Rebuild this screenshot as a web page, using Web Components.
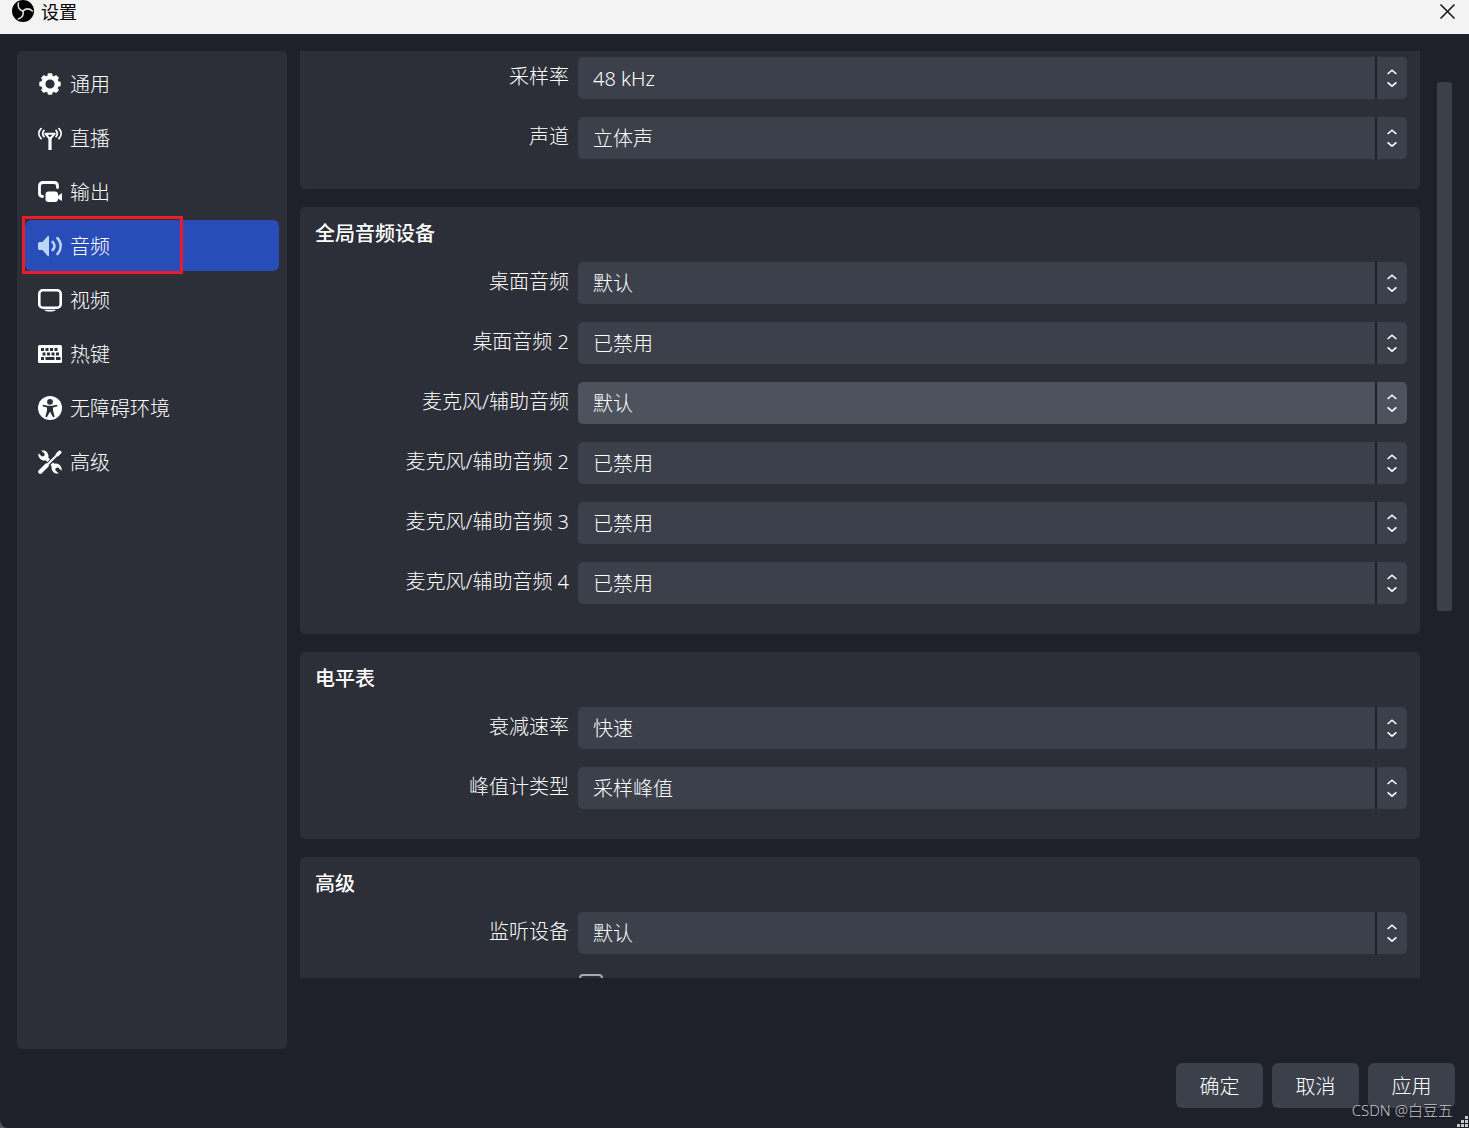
<!DOCTYPE html>
<html lang="zh-CN">
<head>
<meta charset="utf-8">
<title>设置</title>
<style>
html, body { height: 100%; margin: 0; }
body {
  background: #55585f;
  color: #fff;
  font: 300 20px/30px "Noto Sans", "Noto Sans CJK SC", sans-serif;
  --window: #1f212a;
  --panel: #2c2e38;
  --control: #3c404b;
  --control-hot: #4e525c;
  --accent: #284cb8;
}
</style>
</head>
<body>
<settings-window>
  <title-bar slot="title">设置</title-bar>
  <nav-list slot="nav">
    <nav-item icon="gear">通用</nav-item>
    <nav-item icon="antenna">直播</nav-item>
    <nav-item icon="output">输出</nav-item>
    <nav-item icon="audio" selected>音频</nav-item>
    <nav-item icon="video">视频</nav-item>
    <nav-item icon="keyboard">热键</nav-item>
    <nav-item icon="access">无障碍环境</nav-item>
    <nav-item icon="tools">高级</nav-item>
  </nav-list>
  <settings-group>
    <setting-row label="采样率" value="48 kHz"></setting-row>
    <setting-row label="声道" value="立体声"></setting-row>
  </settings-group>
  <settings-group heading="全局音频设备">
    <setting-row label="桌面音频" value="默认"></setting-row>
    <setting-row label="桌面音频 2" value="已禁用"></setting-row>
    <setting-row label="麦克风/辅助音频" value="默认" hot></setting-row>
    <setting-row label="麦克风/辅助音频 2" value="已禁用"></setting-row>
    <setting-row label="麦克风/辅助音频 3" value="已禁用"></setting-row>
    <setting-row label="麦克风/辅助音频 4" value="已禁用"></setting-row>
  </settings-group>
  <settings-group heading="电平表">
    <setting-row label="衰减速率" value="快速"></setting-row>
    <setting-row label="峰值计类型" value="采样峰值"></setting-row>
  </settings-group>
  <settings-group heading="高级">
    <setting-row label="监听设备" value="默认"></setting-row>
    <check-row></check-row>
  </settings-group>
  <push-button slot="actions">确定</push-button>
  <push-button slot="actions">取消</push-button>
  <push-button slot="actions">应用</push-button>
</settings-window>

<script>
const teeth = '<rect x="9.6" y="1.3" width="4.8" height="4" rx="1.2"/><rect x="9.6" y="18.7" width="4.8" height="4" rx="1.2"/><rect x="1.3" y="9.6" width="4" height="4.8" rx="1.2"/><rect x="18.7" y="9.6" width="4" height="4.8" rx="1.2"/>';
const icons = {
  gear: `<g fill="#fff"><path fill-rule="evenodd" d="M12 3.2a8.8 8.8 0 1 0 0 17.6a8.8 8.800 0 0 0 0-17.6zM12 7.400a4.600 4.600 0 1 1 0 9.200a4.600 4.600 0 0 1 0-9.200z"/>${teeth}<g transform="rotate(45 12 12)">${teeth}</g></g>`,
  antenna: '<g fill="none" stroke="#fff"><path stroke-width="2" d="M7.3 7.7h9.4L12 13z" stroke-linejoin="round"/><path stroke-width="3.2" d="M12 12v12"/><path stroke-width="1.8" stroke-linecap="round" d="M3 2.600C.2 5.500.2 9.600 3 12.500M5.900 4.500c-1.500 1.900-1.500 4.200 0 6.100M21 2.600c2.800 2.900 2.800 7 0 9.900M18.100 4.500c1.500 1.900 1.500 4.200 0 6.100"/></g>',
  output: '<path fill="none" stroke="#fff" stroke-width="2.800" stroke-linecap="round" d="M4.500 16.500C2.500 16.500 1.500 15.500 1.500 13.500V6C1.500 3.500 3 2.500 5 2.500H16C18.500 2.500 19.500 3.800 19.500 6V7.500"/><rect x="7.500" y="11.500" width="12.500" height="10.500" rx="3" fill="#fff"/><path fill="#fff" d="M19 16.500L24 13v8L19 18z"/>',
  audio: '<g fill="#bcd6f5"><path d="M0 9.500Q0 8 1.500 8H4.500L9.500 2.300Q11 1 11 3V21Q11 23 9.500 21.700L4.500 16H1.500Q0 16 0 14.500z"/></g><g fill="none" stroke="#bcd6f5" stroke-width="2.600" stroke-linecap="round"><path d="M14.600 8C17.200 10.500 17.200 13.500 14.600 16"/><path d="M19.500 4.200C23.700 9 23.700 15 19.500 20"/></g>',
  video: '<rect x="1.300" y="2.300" width="21.400" height="17.400" rx="3.500" fill="none" stroke="#fff" stroke-width="2.600"/><path fill="#fff" d="M6 21.700H18Q17 23.400 14 23.400H10Q7 23.400 6 21.700z"/>',
  keyboard: '<rect y="3" width="24" height="18" rx="1.500" fill="#fff"/><g fill="#2c2e38"><path d="M3 6h3v3H3zM7.500 6h3v3h-3zM12 6h3v3h-3zM16.500 6h3v3h-3zM4.500 10.500h3v3h-3zM9 10.500h3v3H9zM13.500 10.500h3v3h-3zM18 10.500h3v3h-3zM3 15h3v3H3zM7.500 15h9v3h-9zM18 15h4.500v3H18z"/></g>',
  access: '<circle cx="12" cy="12" r="12" fill="#fff"/><g fill="#2c2e38"><circle cx="12" cy="5.800" r="2.900"/><path d="M5 8.800L10 9.800H14L19 8.800Q20 9.600 19 10.400L15 11.600V14.500L16.600 20.500Q16 21.800 15 21L12 15.800L9 21Q8 21.800 7.400 20.500L9 14.500V11.600L5 10.400Q4 9.600 5 8.800z"/></g>',
  tools: '<g fill="none" stroke="#fff"><path stroke-width="4.200" stroke-linecap="round" d="M2.300 21.700L8.600 15.400"/><path stroke-width="2" d="M8 16L20 4"/><path stroke-width="3.600" stroke-linecap="round" d="M19.500 4.500L21.700 2.300"/></g><g fill="#fff"><path d="M3.200.6A5.800 5.800 0 0 1 10.300 7.600L12 9.400L9.300 12L7.600 10.200A5.800 5.800 0 0 1 .5 3.300L3.800 6.500L6.300 6L6.700 3.800z"/><path d="M20.800 23.400A5.800 5.800 0 0 1 13.700 16.400L12.400 15L15 12.400L16.400 13.800A5.800 5.800 0 0 1 23.500 20.700L20.200 17.500L17.700 18L17.300 20.200z"/></g>'
};

class Base extends HTMLElement {
  constructor() {
    super();
    this.attachShadow({ mode: "open" });
  }
  connectedCallback() {
    this.shadowRoot.innerHTML = this.render();
  }
}

customElements.define("settings-window", class extends Base {
  render() {
    return `<style>
      :host { display: flex; flex-direction: column; height: 100vh; overflow: hidden; position: relative; background: var(--window); border-bottom-left-radius: 8px; }
      .body { flex: 1; min-height: 0; display: flex; gap: 13px; padding: 17px 17px 14px; }
      .page { flex: 1; min-width: 0; display: flex; gap: 17px; margin-bottom: 71px; }
      .groups { flex: 1; min-width: 0; overflow: hidden; display: flex; flex-direction: column; gap: 18px; }
      .bar { width: 15px; padding-top: 31px; }
      .thumb { height: 59%; border-radius: 3px; background: var(--control); }
      footer { display: flex; justify-content: flex-end; gap: 9px; padding: 0 14px 20px; }
      .mark { position: absolute; right: 16px; bottom: 8px; font-size: 15px; line-height: 20px; color: #c4c5c9; text-shadow: 1px 1px 1px #15161c; pointer-events: none; }
      .grip { position: absolute; right: 1px; bottom: 1px; }
    </style>
    <slot name="title"></slot>
    <div class="body">
      <slot name="nav"></slot>
      <main class="page">
        <div class="groups"><slot></slot></div>
        <div class="bar"><div class="thumb"></div></div>
      </main>
    </div>
    <footer><slot name="actions"></slot></footer>
    <div class="mark">CSDN @白豆五</div>
    <svg class="grip" width="11" height="11" fill="#c8c8c8"><path d="M8 0h3v3H8zM4 4h3v3H4zM8 4h3v3H8zM0 8h3v3H0zM4 8h3v3H4zM8 8h3v3H8z"/></svg>`;
  }
});

customElements.define("title-bar", class extends Base {
  render() {
    const blade = '<path d="M7 3.2C5.600 8 8.500 11.500 12.500 12"/>';
    return `<style>
      :host { display: flex; align-items: flex-start; height: 34px; padding: 0 14px 0 12px; background: #f3f3f3; color: #000; box-sizing: border-box; font-size: 18px; line-height: 24px; font-weight: 400; }
      span { flex: 1; margin-left: 7px; }
      button { border: 0; padding: 4px 0; background: none; display: flex; }
    </style>
    <svg width="22" height="22" viewBox="0 0 24 24"><circle cx="12" cy="12" r="12"/><g fill="none" stroke="#dcdcdc" stroke-width="1.700" stroke-linecap="round">${blade}<g transform="rotate(120 12 12)">${blade}</g><g transform="rotate(240 12 12)">${blade}</g></g></svg>
    <span><slot></slot></span>
    <button aria-label="关闭"><svg width="15" height="15" fill="none" stroke="#111" stroke-width="1.500"><path d="M.5.5l14 14M14.500.5l-14 14"/></svg></button>`;
  }
});

customElements.define("nav-list", class extends Base {
  render() {
    return `<style>
      :host { display: block; width: 270px; flex: none; background: var(--panel); border-radius: 5px; box-sizing: border-box; padding: 7px 8px; }
      nav { display: flex; flex-direction: column; gap: 3px; }
    </style><nav><slot></slot></nav>`;
  }
});

customElements.define("nav-item", class extends Base {
  render() {
    return `<style>
      :host { display: block; position: relative; }
      a { display: flex; align-items: center; gap: 8px; height: 51px; padding-left: 13px; border-radius: 6px; color: inherit; text-decoration: none; }
      span { padding-top: 2px; }
      :host([selected]) a { background: var(--accent); }
      .frame { display: none; }
      :host([selected]) .frame { display: block; position: absolute; left: -3px; top: -4px; bottom: -3px; width: 161px; box-sizing: border-box; border: 3px solid #ed1c24; pointer-events: none; }
    </style>
    <a href="#"><svg width="24" height="24" viewBox="0 0 24 24">${icons[this.getAttribute("icon")]}</svg><span><slot></slot></span></a>
    <div class="frame"></div>`;
  }
});

customElements.define("settings-group", class extends Base {
  render() {
    const heading = this.getAttribute("heading");
    return `<style>
      :host { display: block; flex: none; background: var(--panel); border-radius: ${heading ? "5px" : "0 0 5px 5px"}; padding: ${heading ? "12px" : "6px"} 13px 30px 15px; }
      h2 { margin: 0 0 13px; font-size: 20px; line-height: 30px; font-weight: 500; }
      .rows { display: flex; flex-direction: column; gap: 18px; }
    </style>
    ${heading ? `<h2>${heading}</h2>` : ""}
    <div class="rows"><slot></slot></div>`;
  }
});

customElements.define("setting-row", class extends Base {
  render() {
    return `<style>
      :host { display: grid; grid-template-columns: 254px 1fr; column-gap: 9px; align-items: center; }
      label { text-align: right; padding-bottom: 2px; }
      .combo { display: grid; grid-template-columns: 1fr 32px; }
      select { grid-area: 1 / 1 / 2 / 3; height: 42px; width: 100%; appearance: none; border: 0; border-radius: 5px; padding: 2px 46px 0 15px; background: var(--control); color: inherit; font: inherit; }
      :host([hot]) select { background: var(--control-hot); }
      .arrows { grid-area: 1 / 2 / 2 / 3; box-sizing: border-box; border-left: 2px solid var(--window); display: grid; place-items: center; pointer-events: none; z-index: 1; }
    </style>
    <label for="field">${this.getAttribute("label")}</label>
    <div class="combo">
      <select id="field"><option>${this.getAttribute("value")}</option></select>
      <div class="arrows"><svg width="10" height="18" fill="none" stroke="#fff" stroke-width="1.600"><path d="M.6 5L5 1.200L9.400 5M.6 13.400L5 17.200L9.400 13.400"/></svg></div>
    </div>`;
  }
});

customElements.define("check-row", class extends Base {
  render() {
    return `<style>
      :host { display: block; padding: 2px 0 0 264px; }
      input { display: block; appearance: none; margin: 0; width: 24px; height: 24px; box-sizing: border-box; border: 2px solid #a8aab0; border-radius: 4px; }
    </style><input type="checkbox" aria-label="音频闪避">`;
  }
});

customElements.define("push-button", class extends Base {
  render() {
    return `<style>
      :host { display: block; }
      button { width: 87px; height: 45px; border: 0; border-radius: 6px; padding: 2px 0 0; background: var(--control); color: inherit; font: inherit; }
    </style><button><slot></slot></button>`;
  }
});
</script>
</body>
</html>
